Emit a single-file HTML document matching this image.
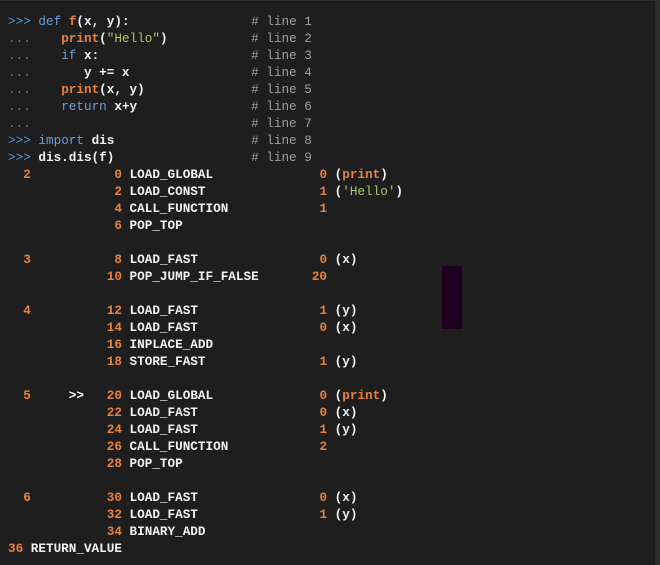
<!DOCTYPE html>
<html><head><meta charset="utf-8"><style>
html,body{margin:0;padding:0;background:#1f1e1f;width:660px;height:565px;overflow:hidden}
body{position:relative}
.top{position:absolute;left:0;top:0;width:660px;height:1px;background:#2e2e2e}
.right{position:absolute;right:0;top:0;width:5px;height:565px;background:#2c2c2c}
.pur{position:absolute;left:442px;top:266px;width:20px;height:63px;background:#1e0020}
pre{position:absolute;left:8px;top:13px;margin:0;font-family:"Liberation Mono",monospace;font-size:12.67px;line-height:17px;color:#f2f2f2;font-weight:bold}
.p{color:#4f9ad8;font-weight:normal}.d{color:#5c7fa8;font-weight:normal}
.k{color:#6a9fd8;font-weight:normal}.o{color:#e8823a}.s{color:#a8c76a;font-weight:normal}
.c{color:#a0a0a0;font-weight:normal}
</style></head><body>
<div class="top"></div><div class="right"></div><div class="pur"></div>
<pre><span class="p">&gt;&gt;&gt;</span> <span class="k">def</span> <span class="o">f</span>(x, y):                <span class="c"># line 1</span>
<span class="d">...</span>    <span class="o">print</span>(<span class="s">"Hello"</span>)           <span class="c"># line 2</span>
<span class="d">...</span>    <span class="k">if</span> x:                    <span class="c"># line 3</span>
<span class="d">...</span>       y += x                <span class="c"># line 4</span>
<span class="d">...</span>    <span class="o">print</span>(x, y)              <span class="c"># line 5</span>
<span class="d">...</span>    <span class="k">return</span> x+y               <span class="c"># line 6</span>
<span class="d">...</span>                             <span class="c"># line 7</span>
<span class="p">&gt;&gt;&gt;</span> <span class="k">import</span> dis                  <span class="c"># line 8</span>
<span class="p">&gt;&gt;&gt;</span> dis.dis(f)                  <span class="c"># line 9</span>
  <span class="o">2</span>           <span class="o">0</span> LOAD_GLOBAL              <span class="o">0</span> (<span class="o">print</span>)
              <span class="o">2</span> LOAD_CONST               <span class="o">1</span> (<span class="s">'Hello'</span>)
              <span class="o">4</span> CALL_FUNCTION            <span class="o">1</span>
              <span class="o">6</span> POP_TOP

  <span class="o">3</span>           <span class="o">8</span> LOAD_FAST                <span class="o">0</span> (x)
             <span class="o">10</span> POP_JUMP_IF_FALSE       <span class="o">20</span>

  <span class="o">4</span>          <span class="o">12</span> LOAD_FAST                <span class="o">1</span> (y)
             <span class="o">14</span> LOAD_FAST                <span class="o">0</span> (x)
             <span class="o">16</span> INPLACE_ADD
             <span class="o">18</span> STORE_FAST               <span class="o">1</span> (y)

  <span class="o">5</span>     &gt;&gt;   <span class="o">20</span> LOAD_GLOBAL              <span class="o">0</span> (<span class="o">print</span>)
             <span class="o">22</span> LOAD_FAST                <span class="o">0</span> (x)
             <span class="o">24</span> LOAD_FAST                <span class="o">1</span> (y)
             <span class="o">26</span> CALL_FUNCTION            <span class="o">2</span>
             <span class="o">28</span> POP_TOP

  <span class="o">6</span>          <span class="o">30</span> LOAD_FAST                <span class="o">0</span> (x)
             <span class="o">32</span> LOAD_FAST                <span class="o">1</span> (y)
             <span class="o">34</span> BINARY_ADD
<span class="o">36</span> RETURN_VALUE</pre>
</body></html>
